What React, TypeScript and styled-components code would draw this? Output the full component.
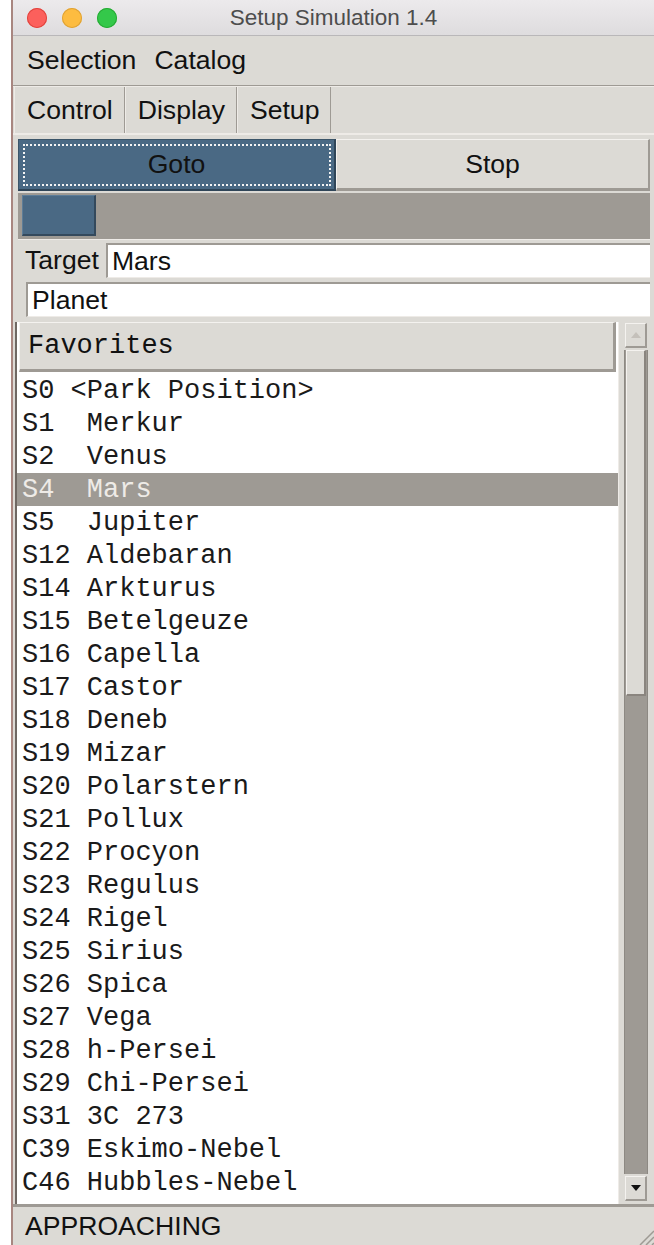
import React from 'react';
import styled, {createGlobalStyle, css} from 'styled-components';

const GlobalStyle = createGlobalStyle`
  html, body {
    margin: 0;
    padding: 0;
    background: #ffffff;
  }
  body {
    font-family: "Liberation Sans", Arial, sans-serif;
    color: #111;
  }
`;

// Tk "clam" palette
const FRAME = '#dcdad5';
const LIGHT = '#eeebe7';
const DARK = '#9e9a94';
const SELECT = '#4a6984';

const Window = styled.div`
  margin-left: 11px;
  width: 641px;
  height: 1245px;
  display: flex;
  flex-direction: column;
  border-left: 2px solid #a88680;
  background: ${FRAME};
  overflow: hidden;
`;

const TitleBar = styled.div`
  height: 36px;
  flex: none;
  display: grid;
  grid-template-columns: 1fr auto 1fr;
  align-items: center;
  background: linear-gradient(#eceaec, #dedcde);
  border-bottom: 1px solid #b9b7b9;
  box-sizing: border-box;
`;

const Lights = styled.div`
  display: flex;
  gap: 15px;
  padding-left: 14px;
`;

const Light = styled.span<{ color: string; edge: string }>`
  width: 20px;
  height: 20px;
  border-radius: 50%;
  background: ${p => p.color};
  box-shadow: inset 0 0 0 1px ${p => p.edge};
`;

const Title = styled.div`
  font-size: 22.5px;
  color: #4d4d4d;
`;

const MenuBar = styled.div`
  height: 50px;
  flex: none;
  display: flex;
  align-items: center;
  padding-left: 5px;
  box-sizing: border-box;
  border-bottom: 1px solid ${DARK};
`;

const MenuItem = styled.span`
  font-size: 26.6px;
  padding: 0 9px;
`;

const TabRow = styled.div`
  height: 47px;
  flex: none;
  display: flex;
  padding-left: 1px;
  border-top: 1px solid ${LIGHT};
  box-sizing: border-box;
`;

const Tab = styled.div`
  display: flex;
  align-items: center;
  padding: 0 11px 0 12px;
  font-size: 26.6px;
  border-left: 1px solid ${LIGHT};
  border-right: 1px solid ${DARK};
`;

const Page = styled.div`
  flex: 1;
  display: flex;
  flex-direction: column;
  padding: 0 4px 0 5px;
  border-top: 2px solid ${LIGHT};
  min-height: 0;
`;

const ButtonRow = styled.div`
  margin-top: 4px;
  height: 52px;
  display: grid;
  grid-template-columns: 318px 1fr;
`;

const Button = styled.div<{ active?: boolean }>`
  display: flex;
  align-items: center;
  justify-content: center;
  font-size: 26.6px;
  box-sizing: border-box;
  ${p => p.active ? css`
    background: ${SELECT};
    border: 1px solid #3b5569;
    border-bottom: 2px solid #2f4558;
    border-right: 2px solid #2f4558;
    outline: 2px dotted #f4f4f4;
    outline-offset: -7px;
  ` : css`
    background: ${FRAME};
    border-top: 1px solid #f4f2ef;
    border-left: 1px solid #f4f2ef;
    border-bottom: 3px solid ${DARK};
    border-right: 2px solid ${DARK};
  `}
`;

const Trough = styled.div`
  margin-top: 2px;
  height: 47px;
  background: ${DARK};
  box-sizing: border-box;
  padding: 2px 3px 3px 4px;
  border-bottom: 1px solid ${LIGHT};
`;

const ProgressBlock = styled.div`
  width: 74px;
  height: 100%;
  box-sizing: border-box;
  background: ${SELECT};
  border-top: 1px solid #5d7d98;
  border-left: 1px solid #5d7d98;
  border-bottom: 2px solid #34495c;
  border-right: 2px solid #34495c;
`;

const FieldRow = styled.div`
  margin-top: 3px;
  height: 35px;
  display: flex;
  align-items: stretch;
`;

const FieldLabel = styled.span`
  display: flex;
  align-items: center;
  font-size: 26.6px;
  padding: 0 7px 0 7px;
`;

const Entry = styled.div<{ inset?: number }>`
  flex: 1;
  display: flex;
  align-items: center;
  margin-left: ${p => p.inset ?? 0}px;
  padding-left: 4px;
  font-size: 26.6px;
  background: #fff;
  border-top: 2px solid ${DARK};
  border-left: 2px solid ${DARK};
  border-bottom: 1px solid ${LIGHT};
`;

const PlanetRow = styled(FieldRow)`
  margin-top: 4px;
`;

const ListArea = styled.div`
  margin-top: 5px;
  margin-left: -3px;
  flex: 1;
  display: grid;
  grid-template-columns: 1fr 32px;
  min-height: 0;
`;

const ListPane = styled.div`
  background: #fff;
  border-left: 2px solid #6f6863;
  display: flex;
  flex-direction: column;
  padding-bottom: 2px;
  overflow: hidden;
`;

const mono = `"Liberation Mono", "Courier New", monospace`;

const Heading = styled.div`
  height: 50px;
  flex: none;
  margin: 0 2px 2px 2px;
  display: flex;
  align-items: center;
  padding-left: 8px;
  font-family: ${mono};
  font-size: 27px;
  background: ${FRAME};
  border-top: 1px solid #f4f2ef;
  border-left: 1px solid #f4f2ef;
  border-right: 3px solid ${DARK};
  border-bottom: 3px solid ${DARK};
  box-sizing: border-box;
`;

const Row = styled.div<{ selected?: boolean }>`
  height: 33px;
  line-height: 35px;
  padding-left: 5px;
  font-family: ${mono};
  font-size: 27px;
  white-space: pre;
  overflow: hidden;
  color: ${p => p.selected ? '#eeebe7' : '#1a1a1a'};
  background: ${p => p.selected ? DARK : 'transparent'};
`;

const ScrollBar = styled.div`
  display: flex;
  flex-direction: column;
  padding: 1px 2px 3px 5px;
  border-left: 1px solid ${LIGHT};
`;

const ArrowButton = styled.div`
  height: 22px;
  flex: none;
  display: flex;
  align-items: center;
  justify-content: center;
  background: ${FRAME};
  border: 1px solid #f4f2ef;
  border-right: 2px solid ${DARK};
  border-bottom: 2px solid ${DARK};
  margin: 0 1px;
`;

const ScrollTrough = styled.div`
  flex: 1;
  display: flex;
  flex-direction: column;
  background: ${DARK};
  border-left: 1px solid #8d8983;
  border-right: 1px solid #8d8983;
  margin: 2px 0;
`;

const Thumb = styled.div`
  height: 343px;
  margin: 0 1px;
  background: ${FRAME};
  border-top: 1px solid #f4f2ef;
  border-left: 1px solid #f4f2ef;
  border-right: 2px solid #8a857f;
  border-bottom: 2px solid #8a857f;
`;

const StatusBar = styled.div`
  height: 38px;
  flex: none;
  display: flex;
  align-items: center;
  padding-left: 12px;
  font-size: 26.6px;
  border-top: 3px solid ${DARK};
`;

const Grip = styled.svg`
  margin-left: auto;
  align-self: flex-end;
`;

const stations = [
  'S0 <Park Position>',
  'S1  Merkur',
  'S2  Venus',
  'S4  Mars',
  'S5  Jupiter',
  'S12 Aldebaran',
  'S14 Arkturus',
  'S15 Betelgeuze',
  'S16 Capella',
  'S17 Castor',
  'S18 Deneb',
  'S19 Mizar',
  'S20 Polarstern',
  'S21 Pollux',
  'S22 Procyon',
  'S23 Regulus',
  'S24 Rigel',
  'S25 Sirius',
  'S26 Spica',
  'S27 Vega',
  'S28 h-Persei',
  'S29 Chi-Persei',
  'S31 3C 273',
  'C39 Eskimo-Nebel',
  'C46 Hubbles-Nebel',
];

const selected = 'S4  Mars';

export default function App() {
  return (
    <>
      <GlobalStyle/>
      <Window>
        <TitleBar>
          <Lights>
            <Light color="#fc605c" edge="#e0443e"/>
            <Light color="#fdbc40" edge="#dea236"/>
            <Light color="#34c84a" edge="#27aa35"/>
          </Lights>
          <Title>Setup Simulation 1.4</Title>
          <span/>
        </TitleBar>

        <MenuBar>
          <MenuItem>Selection</MenuItem>
          <MenuItem>Catalog</MenuItem>
        </MenuBar>

        <TabRow>
          <Tab>Control</Tab>
          <Tab>Display</Tab>
          <Tab>Setup</Tab>
        </TabRow>

        <Page>
          <ButtonRow>
            <Button active>Goto</Button>
            <Button>Stop</Button>
          </ButtonRow>

          <Trough>
            <ProgressBlock/>
          </Trough>

          <FieldRow>
            <FieldLabel>Target</FieldLabel>
            <Entry>Mars</Entry>
          </FieldRow>
          <PlanetRow>
            <Entry inset={8}>Planet</Entry>
          </PlanetRow>

          <ListArea>
            <ListPane>
              <Heading>Favorites</Heading>
              {stations.map(s => (
                <Row key={s} selected={s === selected}>{s}</Row>
              ))}
            </ListPane>
            <ScrollBar>
              <ArrowButton>
                <svg width="10" height="6" viewBox="0 0 10 6">
                  <path d="M0 6 L5 0 L10 6 Z" fill="#c4c0ba"/>
                </svg>
              </ArrowButton>
              <ScrollTrough>
                <Thumb/>
              </ScrollTrough>
              <ArrowButton>
                <svg width="10" height="6" viewBox="0 0 10 6">
                  <path d="M0 0 L10 0 L5 6 Z" fill="#111"/>
                </svg>
              </ArrowButton>
            </ScrollBar>
          </ListArea>
        </Page>

        <StatusBar>
          APPROACHING
          <Grip width="18" height="18" viewBox="0 0 18 18">
            <path d="M18 4 L4 18 M18 10 L10 18 M18 16 L16 18" stroke="#9e9a94" strokeWidth="1.5"/>
          </Grip>
        </StatusBar>
      </Window>
    </>
  );
}
